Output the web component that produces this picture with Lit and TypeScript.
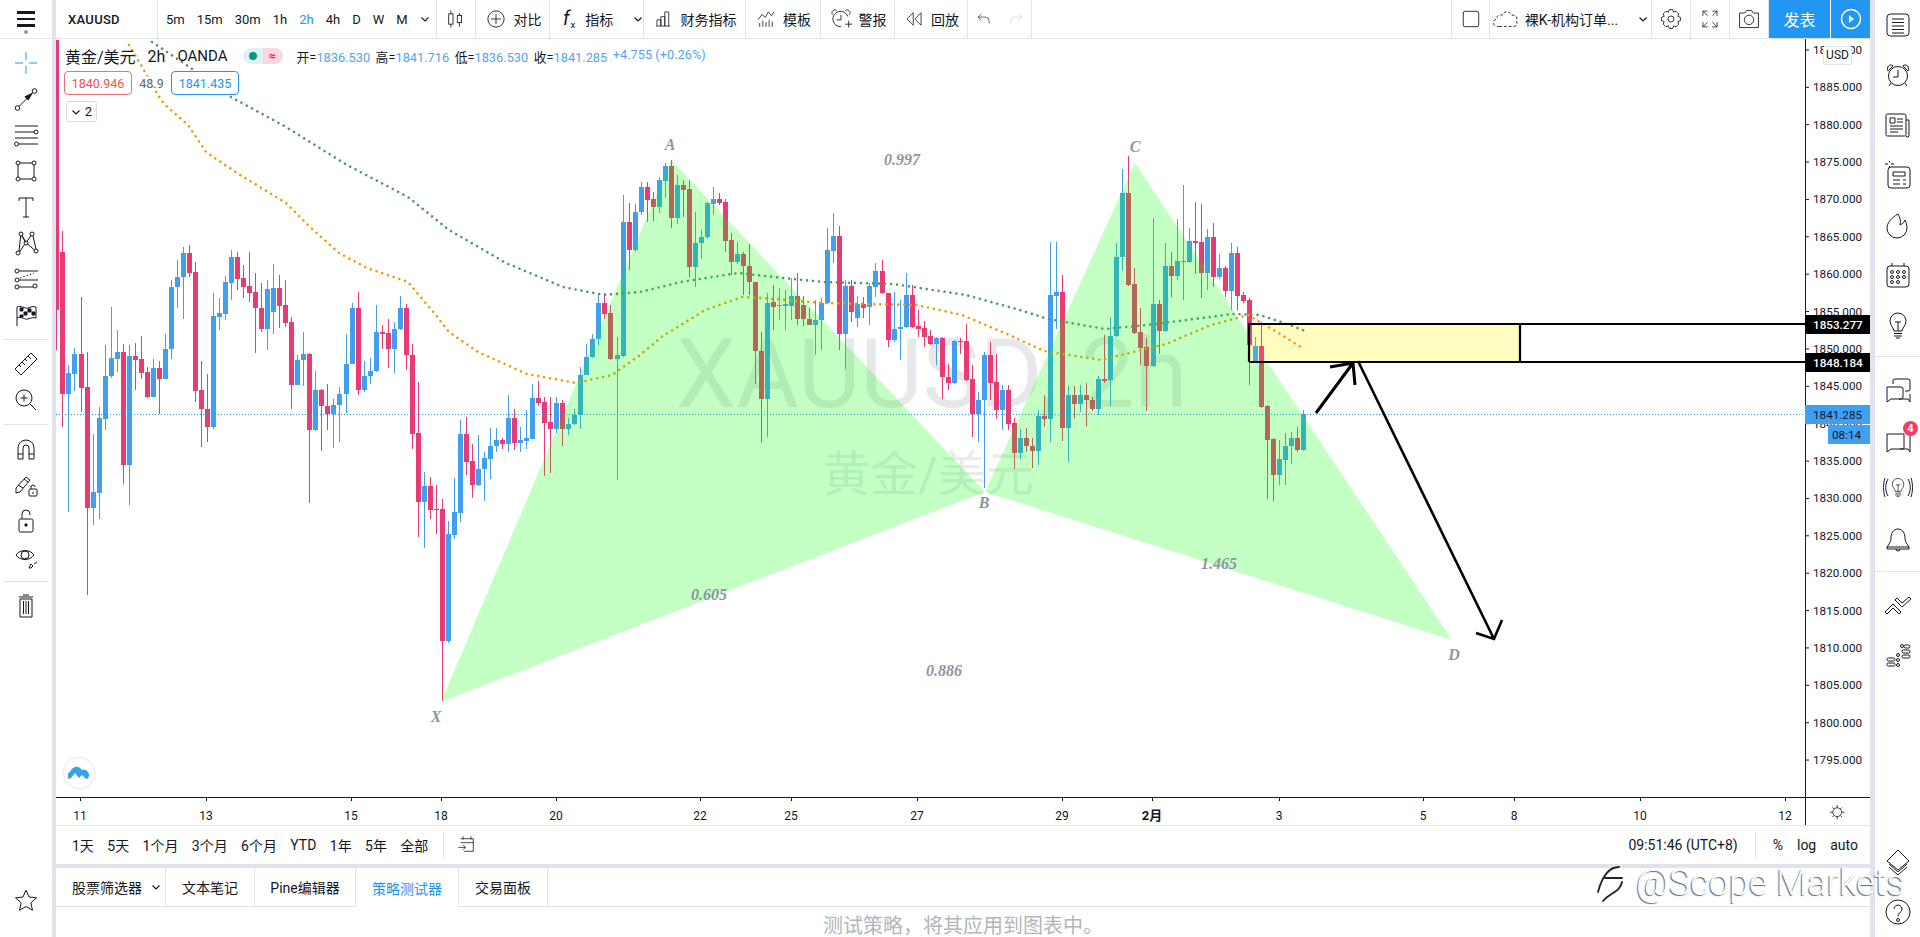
import { LitElement, html, css, svg } from "lit";
import { customElement } from "lit/decorators.js";

// [up, bodyTop, bodyBottom, wickTop, wickBottom] in page pixels
const C: number[][] = [
[0,252,394,231,427],[1,373,394,365,512],[1,354,374,348,391],[0,354,388,297,412],[0,387,508,352,595],[1,492,508,434,525],[1,418,493,407,519],[1,376,419,345,430],[1,358,376,307,378],[1,352,359,330,372],
[0,352,465,344,484],[1,356,465,345,505],[0,356,360,343,390],[0,359,373,336,379],[0,372,397,367,398],[1,368,397,359,397],[0,368,379,361,414],[1,349,379,334,379],[1,287,349,280,359],[1,277,287,260,308],
[1,253,277,247,319],[0,253,273,245,277],[0,272,391,262,402],[0,390,409,361,447],[0,409,427,374,442],[1,316,427,293,429],[1,313,317,298,330],[1,282,314,276,320],[1,257,283,250,300],[0,257,279,252,290],
[0,278,287,265,298],[0,286,293,252,302],[0,292,308,273,353],[0,308,329,283,332],[1,289,329,280,350],[1,288,312,264,334],[0,288,306,275,328],[0,305,323,280,327],[0,322,385,317,409],[1,360,385,355,385],
[1,354,360,332,386],[0,354,430,353,503],[1,390,430,371,431],[0,390,406,389,451],[0,406,414,384,430],[1,405,414,399,448],[1,394,405,387,442],[1,364,394,334,413],[1,308,364,303,364],[0,308,390,292,395],
[1,376,390,361,392],[1,371,376,358,384],[1,332,371,305,372],[0,332,334,325,349],[0,333,349,319,368],[1,329,349,322,373],[1,308,329,296,330],[0,308,355,304,370],[0,355,434,344,449],[0,433,502,382,537],
[1,486,502,472,548],[0,486,510,477,519],[0,509,510,485,534],[0,509,641,499,701],[1,534,641,521,643],[1,512,535,478,539],[1,434,513,420,522],[0,434,462,417,475],[0,461,485,444,498],[1,469,485,435,486],
[1,458,469,452,501],[1,446,459,428,479],[1,440,446,428,452],[0,440,444,438,449],[1,418,444,395,452],[0,418,443,409,450],[1,440,443,427,452],[1,438,441,410,449],[1,398,439,384,439],[0,398,403,381,406],
[0,402,423,397,476],[0,422,429,397,473],[1,403,429,397,433],[0,403,429,400,446],[1,424,429,418,435],[1,415,424,409,425],[1,375,415,367,429],[1,357,375,344,375],[1,339,357,334,358],[1,303,339,293,345],
[0,303,314,293,319],[0,313,359,305,360],[1,355,359,337,480],[1,222,356,195,357],[0,222,250,203,270],[1,212,250,204,252],
[1,187,212,182,215],[0,187,200,182,222],[0,199,207,192,221],[1,180,207,177,213],[1,166,181,163,198],[0,166,218,160,228],[1,185,218,175,224],[0,185,190,180,217],[0,189,267,180,277],[1,243,267,212,287],
[1,237,243,230,259],[1,203,237,202,239],[1,199,204,187,215],[0,199,203,193,205],[0,202,241,199,252],[0,240,262,233,275],[1,254,262,242,264],[0,254,266,252,295],[0,266,282,244,295],[0,282,351,282,384],
[0,351,399,332,443],[1,303,399,293,437],[0,302,307,285,330],[1,305,306,288,320],[1,304,306,290,330],[1,296,306,278,320],[0,296,319,273,325],[0,305,319,296,326],[0,319,325,308,325],[1,320,325,300,355],
[1,303,320,298,350],[1,250,303,228,304],[1,236,251,213,263],[0,236,334,226,350],[1,286,334,280,369],[0,286,312,280,322],[1,304,318,296,327],[0,304,308,297,318],[1,286,307,283,325],[1,271,287,263,297],
[0,271,293,260,294],[0,293,340,293,347],[1,329,340,292,342],[1,327,329,300,360],[1,295,327,273,328],[0,295,327,285,328],[0,326,329,310,337],[0,328,337,321,347],[0,336,344,330,345],[1,338,344,337,365],
[0,338,377,337,399],[0,377,383,364,390],[1,341,383,340,384],[0,341,342,338,354],[0,341,380,324,381],[0,379,414,365,437],[1,400,414,392,442],[1,355,400,352,488],[0,355,383,342,400],[0,382,410,354,419],
[1,390,410,385,430],[0,390,424,385,430],[0,423,453,418,469],[1,438,453,429,459],[0,438,446,428,452],[0,446,451,438,468],[1,416,451,410,465],[0,416,419,395,427],[1,295,419,242,442],[1,292,296,242,329],
[0,292,428,275,441],[1,395,428,386,462],[0,395,404,386,419],[1,395,404,385,412],[0,395,400,383,427],[0,400,409,397,411],[1,379,409,376,415],[0,379,381,335,383],[1,336,380,317,406],[1,257,336,243,337],
[1,193,257,169,271],[0,193,285,156,286],[0,284,333,268,334],[0,332,348,308,365],[0,347,366,338,411],[1,304,366,218,367],[0,304,331,300,354],[1,266,331,243,332],[0,266,276,252,297],[1,261,276,219,280],
[1,261,262,185,300],[1,241,262,228,263],[0,241,243,202,274],[0,242,273,204,298],[1,237,273,229,290],[0,237,277,223,287],[1,268,277,254,279],[0,268,291,266,297],[1,253,291,243,310],[0,253,296,247,310],
[0,295,301,292,303],[0,300,345,298,385],[1,346,362,337,363],[0,346,407,322,408],[0,406,440,405,499],[0,439,475,438,501],[1,459,475,440,485],[1,446,460,433,485],[1,438,446,432,464],[0,438,450,427,452],[1,414,450,410,451],
];

const GREEN = "152,42 188,66 231,97 286,127 347,165 408,197 449,230 506,263 563,287 604,295 640,292 681,282 738,273 783,278 824,282 893,284 966,295 1020,310 1048,319 1105,329 1146,325 1211,317 1232,314 1260,315 1290,325 1305,331";
const ORANGE = "129,45 141,65 158,95 164,104 188,125 206,152 237,173 286,203 310,227 339,253 367,268 408,282 429,307 435,314 449,332 478,352 527,374 576,383 612,375 640,355 664,335 681,325 705,310 742,297 762,298 822,303 917,305 962,315 1007,334 1044,351 1101,360 1166,344 1211,325 1248,315 1277,332 1304,349";

const cx = (i: number) => Math.round((153 + 14.755 * i) / 2.45);
const py = (p: number) => 87.3 + (1885 - p) * 7.475;

const candles = (from = 0) => C.slice(from).map((c, k) => {
  const i = k + from;
  const x = cx(i);
  const col = c[0] ? "#429fef" : "#ea3a74";
  return svg`<rect x=${x} y=${c[3]} width="1" height=${c[4] - c[3]} fill=${col}></rect><rect x=${x - 2} y=${c[1]} width="5" height=${c[2] - c[1]} fill=${col}></rect>`;
});
const mas = () => svg`
  <polyline points=${GREEN} class="ma" stroke="#4c9a5e"></polyline>
  <polyline points=${ORANGE} class="ma" stroke="#f0980f"></polyline>`;

const pLabels: number[] = [];
for (let p = 1890; p >= 1795; p -= 5) pLabels.push(p);
const tLabels: [number, string][] = [[80,"11"],[206,"13"],[351,"15"],[441,"18"],[556,"20"],[700,"22"],[791,"25"],[917,"27"],[1062,"29"],[1152,"2月"],[1279,"3"],[1423,"5"],[1514,"8"],[1640,"10"],[1785,"12"]];
const patternLabels: [number, number, string][] = [[670,150,"A"],[902,165,"0.997"],[1135,152,"C"],[984,508,"B"],[436,722,"X"],[1454,660,"D"],[709,600,"0.605"],[1219,569,"1.465"],[944,676,"0.886"]];

const ic = (c: unknown, s = 28) => html`<svg class="ic" width=${s} height=${s} viewBox="0 0 28 28">${c}</svg>`;

const L = {
  cross: svg`<path class="b" d="M14 3v8M14 17v8M3 14h8M17 14h8"/>`,
  line: svg`<circle cx="5.5" cy="23" r="2.3"/><circle cx="22.5" cy="6" r="2.3"/><path d="M7.2 21.3 20.8 7.7"/><path class="f" d="M20 8.5l-7 3.2 3.2 3.2z"/>`,
  fib: svg`<path d="M3 5h23M3 11h19M3 17h23M7 23h19"/><circle cx="24" cy="11" r="2"/><circle cx="4.5" cy="23" r="2"/>`,
  rect: svg`<path d="M6 8v12M22 8v12M8 6h12M8 22h12"/><circle cx="6" cy="6" r="2"/><circle cx="22" cy="6" r="2"/><circle cx="6" cy="22" r="2"/><circle cx="22" cy="22" r="2"/>`,
  text: svg`<path d="M7 8V5h14v3M14 5v19M11 24h6"/>`,
  pat: svg`<circle cx="6" cy="24" r="2"/><circle cx="9" cy="5" r="2"/><circle cx="14" cy="14" r="2"/><circle cx="20" cy="5" r="2"/><circle cx="24" cy="22" r="2"/><path d="M7 22 8.700 7M10 7l3 5.500M15 12.500l4-6M21 7l3 13M7.500 23 12.500 15.500M15.500 15l7 6M10 6.500l4 7"/>`,
  fork: svg`<circle cx="5" cy="6" r="2"/><circle cx="5" cy="15" r="2"/><circle cx="5" cy="22" r="2"/><circle cx="23" cy="21" r="2"/><path d="M7 6h19M7 15h19M7 22h14"/><path stroke-dasharray="1.500 2" d="M8 13 22 8"/>`,
  flag: svg`<path d="M5 25V6c4-2 8 2 11 1s5-2 8-1v11c-3-1-5 0-8 1s-7-3-11-1"/><path class="f" d="M8 7h3v3H8zM16 8h3v3h-3zM12 11h3v3h-3zM20 11h3v3h-3zM8 14h3v2H8z"/>`,
  ruler: svg`<path d="M3 19 19 3l6 6L9 25zM7 15l2 2M10 12l3 3M13 9l2 2M16 6l3 3"/>`,
  zoom: svg`<circle cx="12" cy="12" r="8"/><path d="M12 8.500v7M8.500 12h7M18 18l6 6"/>`,
  magnet: svg`<path d="M6 24V13a8 8 0 0 1 16 0v11h-5V13a3 3 0 0 0-6 0v11zM6 19h5M17 19h5"/>`,
  pencil: svg`<path d="M4 17 14 6l4 3L8 21l-4 1zM6 14l5 3M12 8l4 3"/><rect x="17" y="18" width="8" height="7" rx="1"/><path d="M19 18v-2a2 2 0 0 1 4 0M21 21v2"/>`,
  lock: svg`<rect x="7" y="12" width="14" height="13" rx="1.500"/><path d="M10 12V7a4 4 0 0 1 8 0v1"/><circle class="f" cx="14" cy="18" r="1.200"/>`,
  eye: svg`<path d="M4 12c4-6 14-6 18 0-4 6-14 6-18 0z"/><circle cx="13" cy="12" r="4"/><path d="M17 25l2-4 2 2-2 2zM22 21l3-2"/>`,
  trash: svg`<path d="M8 7h12v18H8zM7 5h14M11.500 9v13M14 9v13M16.500 9v13M11 3h6"/>`,
  star: svg`<path d="M14 4l3 7 7.500.800-5.700 5 1.700 7.500L14 20.500 7.500 24.300l1.700-7.500-5.700-5 7.500-.800z"/>`,
  list: svg`<rect x="3" y="3" width="22" height="22" rx="3.500"/><path d="M8 8h12M8 11.500h12M8 15h12M8 18.500h12M8 22h12"/>`,
  alarm: svg`<circle cx="14" cy="15" r="9.500"/><path d="M14 9v7H9M4 10C2 6 6 2 9 5zM24 10c2-4-2-8-5-5zM7 22l-2 3M21 22l2 3"/>`,
  news: svg`<rect x="2" y="3" width="20" height="22" rx="1.500"/><path d="M22 9h3v15a1 1 0 0 1-3 1M6 7h5v5H6zM13 8h6M13 11h6M6 15h13M6 18h13M6 21h8"/>`,
  plist: svg`<path class="n" d="M1 3h3M7 3h3M5.500 0v1.500M5.500 5v2"/><rect x="4" y="6" width="22" height="21" rx="3"/><path d="M9 11h12v4H9zM9 19h7M19 19h3M9 23h7M19 23h3"/>`,
  flame: svg`<path d="M14 3c-7 4-11 9-11 14a10 10 0 0 0 20 0c0-3-1-6-2-8-1 3-3 4-5 5 1-4 0-8-2-11z"/>`,
  cal: svg`<rect x="3" y="5" width="22" height="21" rx="3"/><path d="M8 2v3M20 2v3"/><circle cx="8" cy="11" r="1.500"/><circle cx="14" cy="11" r="1.500"/><circle cx="20" cy="11" r="1.500"/><circle cx="8" cy="16" r="1.500"/><circle cx="14" cy="16" r="1.500"/><circle cx="20" cy="16" r="1.500"/><circle cx="8" cy="21" r="1.500"/><circle cx="14" cy="21" r="1.500"/>`,
  bulb: svg`<path d="M10 20c0-3-4-5-4-10a8 8 0 0 1 16 0c0 5-4 7-4 10zM10 22.500h8M10 25h8M12 27h4M11 11h6M14 11v9"/>`,
  chats: svg`<path d="M3 11h14a2 2 0 0 1 2 2v8a2 2 0 0 1-2 2H7l-4 3zM9 8V5a2 2 0 0 1 2-2h13a2 2 0 0 1 2 2v8a2 2 0 0 1-2 2h-3M15 23h9l2 3v-8"/>`,
  chat: svg`<path d="M3 8h17v14a1 1 0 0 1-1 1H7l-4 3zM16 23h8l2 3V10"/>`,
  bulbw: svg`<g transform="translate(4 1) scale(.72)"><path d="M10 20c0-3-4-5-4-10a8 8 0 0 1 16 0c0 5-4 7-4 10zM10 22.500h8M10 25h8M12 27h4M11 11h6M14 11v9"/></g><path d="M4 3c-3 5-3 12 0 17M1 2c-2 6-2 13 0 19M24 3c3 5 3 12 0 17M27 2c2 6 2 13 0 19"/>`,
  bell: svg`<path d="M14 3c-5 0-7 5-7 9 0 4-2 6-4 9h22c-2-3-4-5-4-9 0-4-2-9-7-9zM3 21v2h22v-2M12 23a2 2 0 0 0 4 0"/>`,
  chev: svg`<path d="M1 21 9 13l8 8-2 2-6-6-6 6zM11 9l7 7 9-8-2-2-7 6-5-5z"/>`,
  dots: svg`<rect x="3" y="17" width="8" height="3" rx="1.500"/><rect x="3" y="22" width="8" height="3" rx="1.500"/><circle cx="14" cy="14" r="1.500"/><circle cx="14" cy="19" r="1.500"/><circle cx="14" cy="24" r="1.500"/><circle cx="18" cy="5" r="1.500"/><rect x="18" y="9" width="8" height="3" rx="1.500"/><rect x="18" y="14" width="8" height="3" rx="1.500"/><rect x="20" y="4" width="6" height="3" rx="1.500"/>`,
  layers: svg`<path d="M14 2l11 11-11 9L3 13zM5 16l9 8 9-8M5 19l9 8 9-8"/>`,
  help: svg`<circle cx="14" cy="14" r="12"/><path d="M10 11a4 4 0 1 1 6 3.500c-1.500 1-2 2-2 4"/><circle cx="14" cy="22" r="1.500"/>`,
  sun: svg`<circle cx="14" cy="14" r="5.500"/><path d="M14 5v3.500M14 19.500V23M5 14h3.500M19.500 14H23M8 8l2 2M18 18l2 2M8 20l2-2M18 10l2-2"/>`,
  rng: svg`<path d="M6 6h16v16H10M9 3v4M19 3v4M6 11h16M3 17h9M9 14l3 3-3 3"/>`,
};

const T = {
  candle: svg`<path d="M8 4v20M18 7v16"/><rect x="5.500" y="8" width="5" height="12" fill="#fff"/><rect x="15.500" y="10" width="5" height="8" fill="#fff"/>`,
  plus: svg`<circle cx="14" cy="14" r="9.500"/><path d="M14 8v12M8 14h12"/>`,
  bars: svg`<path d="M5 23v-8h5v8M10 23V11h5v12M15 23V5h5v18M4 23h18"/>`,
  tpl: svg`<path d="M4 15l5-7 4 4 4-7 4 5 3-5M6 24v-5M10 24v-8M14 24v-6M18 24v-9M22 24v-7"/>`,
  alarm: svg`<path d="M22 11a9 9 0 1 0-8 12M14 9v6h-5M4 9C2 5 6 2 9 4M24 9c2-4-2-7-5-5M19 20h8M23 16v8"/>`,
  rew: svg`<path d="M13 6 5 14l8 8zM23 6l-8 8 8 8z"/>`,
  undo: svg`<path d="M5 11l5-5M5 11l5 5M5 11h11a6 6 0 0 1 6 6v4"/>`,
  redo: svg`<path class="g" d="M23 11l-5-5M23 11l-5 5M23 11H12a6 6 0 0 0-6 6v4"/>`,
  sq: svg`<rect x="5" y="5" width="18" height="18" rx="2"/>`,
  cloud: svg`<path stroke-dasharray="3 2.200" d="M7 22H5a4 4 0 0 1-1-8c0-5 5-5 6-4 1-4 7-6 10 0 5-1 7 3 5 6 2 2 1 6-3 6z"/>`,
  gear: svg`<path d="M12 3h4l1 3 3-1 3 3-1 3 3 1v4l-3 1 1 3-3 3-3-1-1 3h-4l-1-3-3 1-3-3 1-3-3-1v-4l3-1-1-3 3-3 3 1z"/><circle cx="14" cy="14" r="3.500"/>`,
  full: svg`<path d="M5 10V4h6M5 4l6 6M23 10V4h-6M23 4l-6 6M5 18v6h6M5 24l6-6M23 18v6h-6M23 24l-6-6"/>`,
  cam: svg`<path d="M3 7h6l2-3h6l2 3h6v17H3z"/><circle cx="14" cy="15" r="5.500"/>`,
};

const seg = (w: number, content: unknown, extra = "") => html`<div class="seg ${extra}" style="width:${w}px">${content}</div>`;
const intervals = ["5m","15m","30m","1h","2h","4h","D","W","M"];
const rng = ["1天","5天","1个月","3个月","6个月","YTD","1年","5年","全部"];
const chevron = html`<svg class="ch" width="10" height="10" viewBox="0 0 10 10"><path d="M1.500 3.500 5 7l3.500-3.500"/></svg>`;
const leftA = [L.cross,L.line,L.fib,L.rect,L.text,L.pat,L.fork,L.flag];
const leftB = [L.ruler,L.zoom];
const leftC = [L.magnet,L.pencil,L.lock,L.eye];
const rightA = [L.list,L.alarm,L.news,L.plist,L.flame,L.cal,L.bulb];

@customElement("app-root")
export class AppRoot extends LitElement {
  static styles = css`
    :host { display: block; width: 1920px; height: 937px; overflow: hidden; position: relative; background: #fff;
      font-family: Roboto, "Noto Sans CJK SC", sans-serif; color: #131722; font-size: 13px; }
    .root { display: flex; width: 1920px; height: 937px; }
    .left { width: 52px; display: flex; flex-direction: column; flex: none; }
    .burger { height: 38px; border-bottom: 1px solid #e0e3eb; display: flex; flex-direction: column; align-items: center; justify-content: center; position: relative; margin-bottom: 6px; }
    .burger i { display: block; width: 18px; height: 2.5px; background: #131722; margin: 2px 0; }
    .burger b { position: absolute; top: 30px; left: 24px; width: 4px; height: 4px; border-radius: 50%; background: #999; }
    .tool { height: 36px; display: flex; align-items: center; justify-content: center; flex: none; }
    .sep { height: 1px; background: #e0e3eb; margin: 6px 4px 6px 4px; flex: none; }
    .push { margin-top: auto; margin-bottom: 19px; }
    .gut { width: 4px; background: #e0e3eb; flex: none; }
    .gut2 { width: 5px; background: #e0e3eb; flex: none; }
    .center { width: 1814px; display: flex; flex-direction: column; flex: none; }
    .top { height: 38px; border-bottom: 1px solid #e0e3eb; display: flex; flex: none; }
    .seg { display: flex; align-items: center; justify-content: center; gap: 6px; height: 38px; border-right: 1px solid #e0e3eb; box-sizing: border-box; flex: none; font-size: 14px; white-space: nowrap; }
    .sym { justify-content: flex-start; padding-left: 12px; font-weight: 500; font-size: 13px; letter-spacing: .3px; }
    .iv { justify-content: flex-start; padding-left: 8px; gap: 12px; font-size: 13px; }
    .iv .on { color: #2196f3; }
    .ind { justify-content: flex-start; padding-left: 10px; }
    .spacer { flex: 1; }
    .pub { background: #2196f3; color: #fff; border: none; font-size: 16px; border-right: 1px solid #fff; }
    .play { background: #2196f3; border: none; }
    .chartrow { display: flex; height: 758px; flex: none; }
    .chart { display: block; width: 1749px; height: 758px; }
    .pane { position: relative; width: 1749px; height: 758px; flex: none; overflow: hidden; }
    .axis { display: block; width: 65px; height: 758px; flex: none; }
    .time { height: 28px; flex: none; }
    .time svg { display: block; width: 1814px; height: 28px; }
    .rbar { height: 39px; border-top: 1px solid #e0e3eb; box-sizing: border-box; display: flex; align-items: center; flex: none; padding-left: 16px; font-size: 14px; }
    .rng { display: flex; gap: 13.400px; align-items: center; }
    .vs { width: 1px; height: 26px; background: #e0e3eb; margin: 0 12px 0 15px; }
    .rr { margin-left: auto; display: flex; align-items: center; gap: 0; padding-right: 12px; }
    .rr .vs { margin: 0 17px; }
    .rr span + span { margin-left: 14px; }
    .hg { height: 4px; background: #e0e3eb; flex: none; }
    .tabs { height: 39px; border-bottom: 1px solid #e0e3eb; box-sizing: border-box; display: flex; flex: none; }
    .tab { height: 38px; display: flex; align-items: center; justify-content: center; border-right: 1px solid #e0e3eb; box-sizing: border-box; font-size: 14px; flex: none; }
    .tab.first { justify-content: flex-start; padding-left: 16px; gap: 9px; }
    .tab.on { color: #2196f3; background: #fff; height: 39px; }
    .empty { flex: 1; overflow: hidden; text-align: center; color: #b2b5be; font-size: 20px; line-height: 38px; white-space: nowrap; }
    .right { width: 45px; display: flex; flex-direction: column; align-items: stretch; flex: none; }
    .rt { height: 50px; display: flex; align-items: center; justify-content: center; flex: none; position: relative; }
    .badge { position: absolute; left: 28px; top: 6px; width: 15px; height: 15px; border-radius: 50%; background: #f23d63; color: #fff; font-size: 11px; font-weight: 700; line-height: 15px; text-align: center; }
    .rsep { height: 1px; background: #e0e3eb; margin: 6px 0 8px 0; flex: none; }
    .end { margin-top: auto; }
    .ic { display: block; fill: none; stroke: #131722; stroke-width: 1; overflow: visible; }
    .ic .b, .ic path.b { stroke: #2196f3; }
    .ic .f { fill: #131722; }
    .ic .g { stroke: #c5c8d0; }
    .ch { fill: none; stroke: #131722; stroke-width: 1.1; flex: none; }
    .ma { fill: none; stroke-width: 2.600; stroke-linecap: round; stroke-dasharray: .01 6; }
    .legend { position: absolute; left: 9px; top: 8px; display: flex; align-items: center; height: 18px; white-space: nowrap; }
    .lt { font-size: 16px; margin-right: 12px; }
    .lt.oa { font-size: 15px; margin-right: 12px; }
    .pill { display: flex; height: 16px; border-radius: 8px; overflow: hidden; margin: 0 14px 0 3px; }
    .pill i { display: flex; width: 20px; align-items: center; justify-content: center; background: #dff2f0; font-style: normal; }
    .pill i:last-child { background: #fad6e2; color: #d81b60; font-weight: 700; font-size: 12px; }
    .pill b { width: 8px; height: 8px; border-radius: 50%; background: #089981; }
    .ohlc { font-size: 12.800px; display: flex; gap: 5.500px; color: #131722; }
    .ohlc em { font-style: normal; color: #53a5ed; }
    .chips { position: absolute; left: 8px; top: 32px; display: flex; align-items: center; }
    .chip { height: 24px; box-sizing: border-box; border: 1px solid #e57373; border-radius: 4px; color: #ef5350; background: #fff; width: 68px; display: flex; align-items: center; justify-content: center; font-size: 12.500px; }
    .chip.bl { border-color: #2196f3; color: #2196f3; }
    .mid { width: 39px; text-align: center; color: #666; font-size: 12.500px; background: rgba(255,255,255,.6); }
    .col { position: absolute; left: 10px; top: 62px; width: 31px; height: 21px; box-sizing: border-box; border: 1px solid #d8dbe3; border-radius: 3px; display: flex; align-items: center; justify-content: center; gap: 4px; background: #fff; }
    .logo { position: absolute; left: 7px; top: 718px; width: 32px; height: 32px; border-radius: 50%; background: #fff; border: 1px solid #eee; box-sizing: border-box; display: flex; align-items: center; justify-content: center; box-shadow: 0 0 2px #e8e8e8; }
    .usd { position: absolute; left: 1823px; top: 46px; width: 29px; height: 19px; border: 1px solid #e0e3eb; border-radius: 2px; background: #fff; box-sizing: border-box; font-size: 12px; line-height: 17px; text-align: center; }
    .wm { position: absolute; left: 1596px; top: 862px; display: flex; align-items: center; gap: 12px; pointer-events: none; }
    .wm span { font-size: 36px; font-weight: 300; color: #fff; text-shadow: -1px 1px 1px rgba(0,0,0,.6); letter-spacing: 0; white-space: nowrap; }
    .wm svg { fill: none; stroke: #222; stroke-width: 1.800; stroke-linecap: round; }
    text { font-family: Roboto, "Noto Sans CJK SC", sans-serif; }
    .pl { font-size: 11.700px; fill: #131722; }
    .tl { font-size: 12px; fill: #131722; text-anchor: middle; }
    .tl.bd { font-weight: 700; font-size: 13px; }
    .tb { font-size: 11.700px; font-weight: 500; fill: #fff; }
    .pat { font-family: "Liberation Serif", serif; font-size: 16px; font-weight: 700; font-style: italic; fill: #8f93a0; text-anchor: middle; }
    .w1 { font-size: 96px; fill: rgba(120,128,150,.18); }
    .w2 { font-size: 48px; fill: rgba(120,128,150,.18); }
  `;

  render() {
    return html`<div class="root">
      <div class="left">
        <div class="burger"><i></i><i></i><i></i><b></b></div>
        ${leftA.map(i => html`<div class="tool">${ic(i)}</div>`)}
        <div class="sep"></div>
        ${leftB.map(i => html`<div class="tool">${ic(i)}</div>`)}
        <div class="sep"></div>
        ${leftC.map(i => html`<div class="tool">${ic(i)}</div>`)}
        <div class="sep"></div>
        <div class="tool">${ic(L.trash)}</div>
        <div class="tool push">${ic(L.star)}</div>
      </div>
      <div class="gut"></div>
      <div class="center">
        <div class="top">
          ${seg(102, "XAUUSD", "sym")}
          ${seg(279, html`${intervals.map(t => html`<span class=${t === "2h" ? "on" : ""}>${t}</span>`)}${chevron}`, "iv")}
          ${seg(39, ic(T.candle, 24))}
          ${seg(74, html`${ic(T.plus, 24)}<span>对比</span>`)}
          ${seg(94, html`<svg width="20" height="24" viewBox="0 0 20 24"><text x="3" y="18" font-size="20" font-style="italic" font-family="Liberation Serif" fill="#131722">f</text><text x="11" y="21" font-size="10" fill="#131722">x</text></svg><span>指标</span><span style="width:8px"></span>${chevron}`, "ind")}
          ${seg(102, html`${ic(T.bars, 22)}<span>财务指标</span>`)}
          ${seg(75, html`${ic(T.tpl, 22)}<span>模板</span>`)}
          ${seg(74, html`${ic(T.alarm, 24)}<span>警报</span>`)}
          ${seg(73, html`${ic(T.rew, 22)}<span>回放</span>`)}
          ${seg(64, html`${ic(T.undo, 18)}<span style="width:2px"></span>${ic(T.redo, 18)}`)}
          <div class="spacer"></div>
          <div class="seg" style="width:1px;border-right:1px solid #e0e3eb"></div>
          ${seg(38, ic(T.sq, 24))}
          ${seg(162, html`${ic(T.cloud, 26)}<span>裸K-机构订单...</span><span style="width:8px"></span>${chevron}`)}
          ${seg(39, ic(T.gear, 24))}
          ${seg(39, ic(T.full, 22))}
          ${seg(39, ic(T.cam, 24))}
          ${seg(62, "发表", "pub")}
          ${seg(39, html`<svg width="24" height="24" viewBox="0 0 24 24"><circle cx="12" cy="12" r="9.500" fill="none" stroke="#fff" stroke-width="1.500"/><path d="M10 8l5 4-5 4z" fill="#fff"/></svg>`, "play")}
        </div>
        <div class="chartrow">
          <div class="pane">
            <svg class="chart" viewBox="56 39 1749 758">
              <defs><clipPath id="bx"><rect x="1250" y="325" width="270" height="37"></rect></clipPath></defs>
              <text x="676" y="407" class="w1">XAUUSD, 2h</text>
              <text x="822" y="491" class="w2">黄金/美元</text>
              <rect x="56" y="40" width="3" height="270" fill="#ea3a74"></rect>
              <rect x="56" y="310" width="1" height="40" fill="#ea3a74"></rect>
              ${candles()}
              ${mas()}
              <path d="M56 414.500H1805" stroke="#2196f3" stroke-width="1" stroke-dasharray="1 2"></path>
              <path d="M441 702 671 160 985 492zM985 492 1135 163 1452 640z" fill="rgba(0,255,0,.23)"></path>
              <rect x="1249" y="324" width="271" height="38" fill="rgba(255,251,180,.85)"></rect>
              <g clip-path="url(#bx)" opacity=".9">${candles(196)}${mas()}</g>
              <path d="M1249 362V324H1805M1249 362H1805M1520 324V362" fill="none" stroke="#000" stroke-width="2.200"></path>
              <path d="M1316 413 1353 363M1330 367 1353 363 1355 385" fill="none" stroke="#000" stroke-width="3"></path>
              <path d="M1358 361 1494 639M1476 633 1494 639 1502 620" fill="none" stroke="#000" stroke-width="2.600"></path>
              ${patternLabels.map(([x, y, t]) => svg`<text x=${x} y=${y} class="pat">${t}</text>`)}
            </svg>
            <div class="legend">
              <span class="lt">黄金/美元</span><span class="lt">2h</span><span class="lt oa">OANDA</span>
              <div class="pill"><i><b></b></i><i>≈</i></div>
              <div class="ohlc"><span>开=<em>1836.530</em></span><span>高=<em>1841.716</em></span><span>低=<em>1836.530</em></span><span>收=<em>1841.285</em></span><em>+4.755 (+0.26%)</em></div>
            </div>
            <div class="chips"><div class="chip">1840.946</div><div class="mid">48.9</div><div class="chip bl">1841.435</div></div>
            <div class="col">${chevron}<span>2</span></div>
            <div class="logo"><svg width="22" height="14" viewBox="0 0 22 14"><path d="M1 13a4 4 0 0 1 1-7c1-3 5-6 8-5 2 .500 3 2 4 3 3-1 7 1 7 5 0 2-1 4-3 4l-4-4-3 3-4-5-4 5z" fill="#36a2e8"></path></svg></div>
          </div>
          <svg class="axis" viewBox="1805 39 65 758">
            <path d="M1805.500 39V797" stroke="#131722" stroke-width="1"></path>
            ${pLabels.map(p => svg`<path d="M1805 ${py(p)}h4" stroke="#131722"></path><text x="1813" y=${py(p) + 4} class="pl">${p.toFixed(3)}</text>`)}
            <rect x="1805" y="315" width="65" height="19" fill="#000"></rect>
            <text x="1813" y="329" class="tb">1853.277</text>
            <rect x="1805" y="353" width="65" height="19" fill="#000"></rect>
            <text x="1813" y="367" class="tb">1848.184</text>
            <rect x="1805" y="405" width="65" height="19" fill="#3da0f4"></rect>
            <text x="1813" y="419" class="pl">1841.285</text>
            <rect x="1828" y="425" width="42" height="19" fill="#3da0f4"></rect>
            <text x="1832" y="439" class="pl">08:14</text>
          </svg>
        </div>
        <div class="time"><svg viewBox="56 797 1814 28">
          <path d="M56 797.500H1870" stroke="#131722" stroke-width="1"></path>
          <path d="M1805.500 797V825" stroke="#131722" stroke-width="1"></path>
          ${tLabels.map(([x, t]) => svg`<path d="M${x}.500 798v3" stroke="#131722"></path><text x=${x} y="820" class=${t === "2月" ? "tl bd" : "tl"}>${t}</text>`)}
          <g transform="translate(1826 801) scale(.8)" class="ic">${L.sun}</g>
        </svg></div>
        <div class="rbar">
          <div class="rng">${rng.map(t => html`<span>${t}</span>`)}</div>
          <div class="vs"></div>
          ${ic(L.rng, 22)}
          <div class="rr"><span>09:51:46 (UTC+8)</span><div class="vs"></div><span>%</span><span>log</span><span>auto</span></div>
        </div>
        <div class="hg"></div>
        <div class="tabs">
          <div class="tab first" style="width:110px"><span>股票筛选器</span>${chevron}</div>
          <div class="tab" style="width:89px">文本笔记</div>
          <div class="tab" style="width:101px">Pine编辑器</div>
          <div class="tab on" style="width:103px">策略测试器</div>
          <div class="tab" style="width:89px">交易面板</div>
        </div>
        <div class="empty">测试策略，将其应用到图表中。</div>
      </div>
      <div class="gut2"></div>
      <div class="right">
        ${rightA.map(i => html`<div class="rt">${ic(i)}</div>`)}
        <div class="rsep"></div>
        <div class="rt">${ic(L.chats)}</div>
        <div class="rt">${ic(L.chat)}<span class="badge">4</span></div>
        <div class="rt">${ic(L.bulbw)}</div>
        <div class="rt">${ic(L.bell)}</div>
        <div class="rsep"></div>
        <div class="rt">${ic(L.chev)}</div>
        <div class="rt">${ic(L.dots)}</div>
        <div class="rt end">${ic(L.layers)}</div>
        <div class="rt">${ic(L.help)}</div>
      </div>
    </div>
    <div class="usd">USD</div>
    <div class="wm"><svg width="28" height="40" viewBox="0 0 28 40"><path d="M23 4C13 4 6 14 2 29M9 15H26M26 19C24 29 15 29 7 38"></path></svg><span>@Scope Markets</span></div>`;
  }
}
